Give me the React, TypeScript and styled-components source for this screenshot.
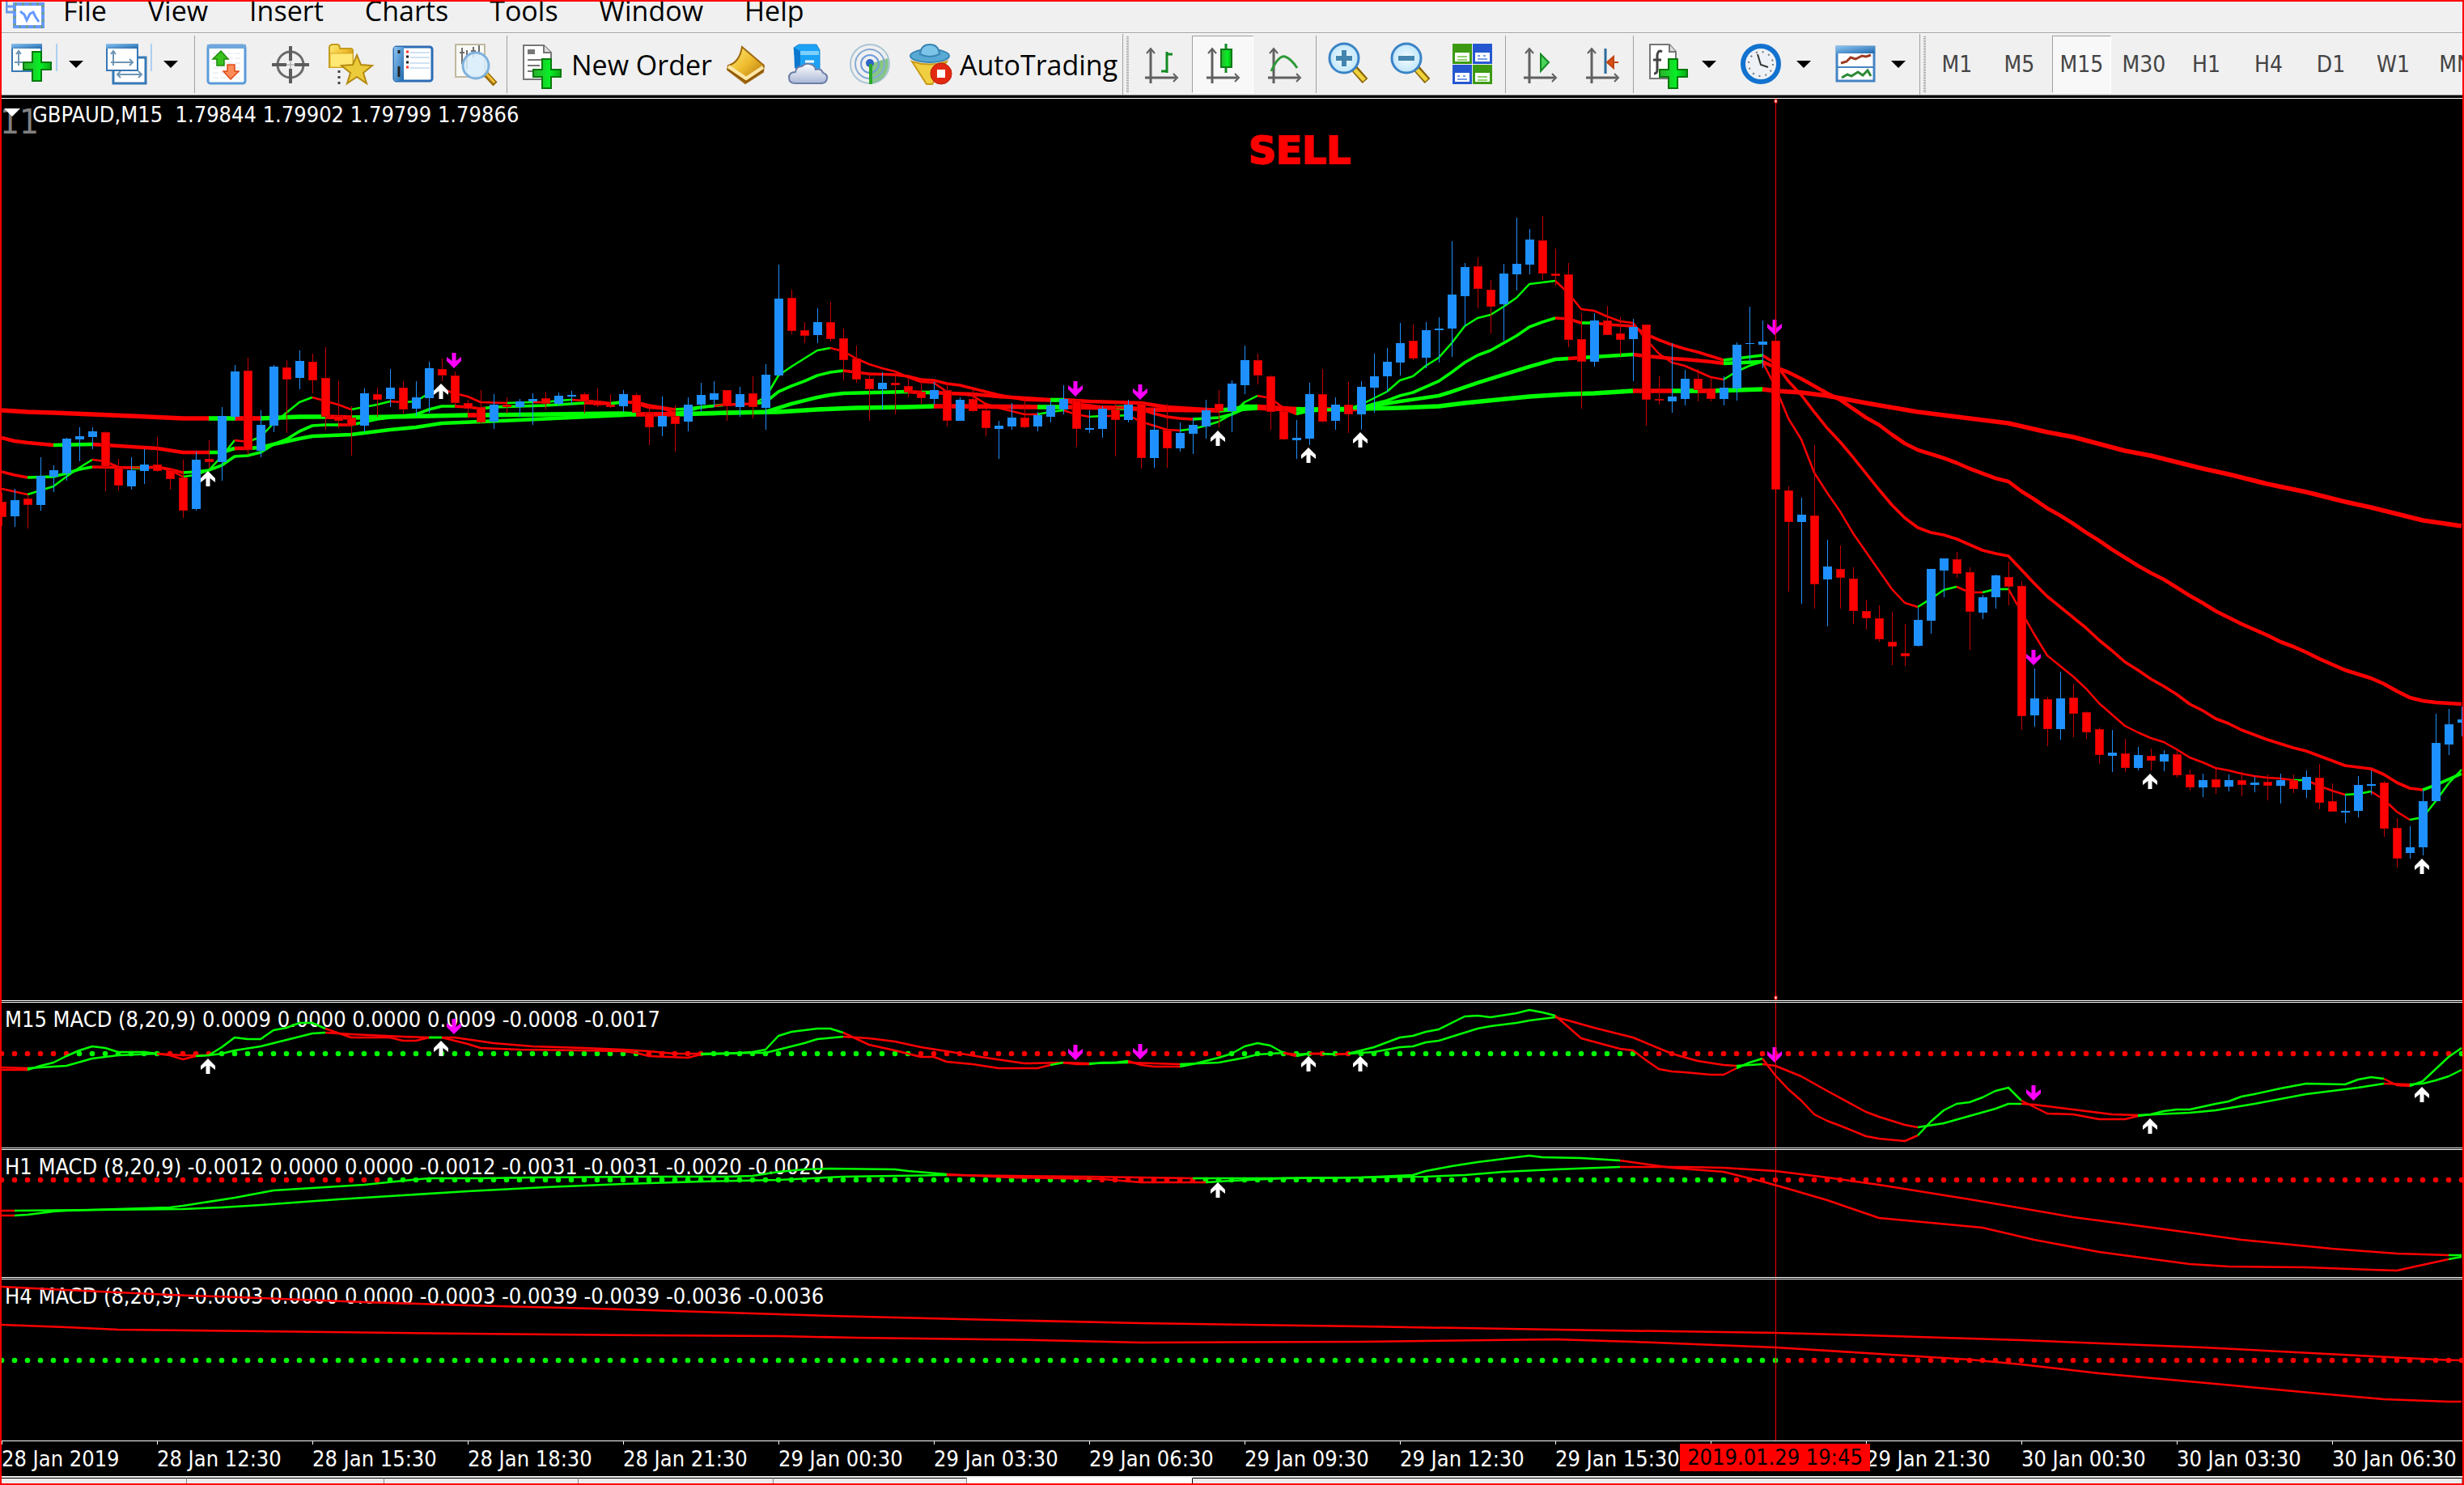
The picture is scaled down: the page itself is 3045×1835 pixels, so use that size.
import React from "react";
import styled, { createGlobalStyle, css } from "styled-components";

const UI_FONT = '"Open Sans", "Noto Sans", sans-serif';
const CHART_FONT = '"DejaVu Sans Condensed", "DejaVu Sans", sans-serif';

const RED = "#ff0000";
const LIME = "#00ff00";
const BLUE = "#1e90ff";
const STEP = 16;

const GlobalStyle = createGlobalStyle`
  *, *::before, *::after { box-sizing: border-box; }
  body { margin: 0; background: #000; overflow: hidden; }
`;

/* ---------- layout ---------- */

const Frame = styled.div`
  display: flex;
  flex-direction: column;
  height: 100vh;
  border: 2px solid ${RED};
  background: #000;
  overflow: hidden;
`;

const MenuBar = styled.nav`
  display: flex;
  flex: none;
  align-items: flex-start;
  gap: 51px;
  height: 39px;
  padding-left: 5px;
  background: #f0f0f0;
  border-bottom: 1px solid #a0a0a0;
  overflow: hidden;
`;

const MenuItem = styled.button`
  margin: -13px 0 0;
  padding: 0;
  border: 0;
  background: none;
  color: #000;
  font: 34px/48px ${UI_FONT};
`;

const AppIcon = styled.svg`
  width: 50px;
  height: 34px;
  margin-right: -30px;
`;

const Toolbar = styled.div`
  display: flex;
  flex: none;
  height: 77px;
  border-top: 1px solid #fff;
  border-bottom: 1px solid #808080;
  background: #f0f0f0;
  overflow: hidden;
`;

const Group = styled.div<{ $w: number; $pad?: number; $gap?: number }>`
  display: flex;
  flex: none;
  width: ${(p) => p.$w}px;
  padding: 2px 0 2px ${(p) => p.$pad ?? 0}px;
  gap: ${(p) => p.$gap ?? 0}px;
`;

const Divider = styled.span`
  flex: none;
  width: 1px;
  margin: 2px 0;
  background: #a0a0a0;
`;

const Grip = styled.span`
  flex: none;
  width: 10px;
  border-left: 1px solid #a0a0a0;
  background: repeating-linear-gradient(#a0a0a0 0 1px, #f0f0f0 1px 2px) 4px 3px / 3px 69px no-repeat;
`;

const ToolButton = styled.button<{ $w: number; $pressed?: boolean }>`
  display: flex;
  flex: none;
  align-items: center;
  justify-content: center;
  width: ${(p) => p.$w}px;
  padding: 0;
  border: 1px solid transparent;
  background: none;
  color: #000;
  font: 34px/48px ${UI_FONT};
  white-space: nowrap;
  svg { display: block; flex: none; overflow: visible; }
  ${(p) =>
    p.$pressed &&
    css`
      background: #f8f8f8;
      border-color: #a0a0a0 #fff #fff #a0a0a0;
    `}
`;

const LabelButton = styled(ToolButton)`
  justify-content: flex-start;
  gap: 6px;
  padding-left: 6px;
`;

const PeriodButton = styled(ToolButton)`
  color: #444;
  font: 28px/36px ${CHART_FONT};
`;

const Caret = styled.span`
  border: 9px solid transparent;
  border-top-color: #000;
  border-bottom: 0;
`;

const ChartWindow = styled.main`
  display: flex;
  flex: 1;
  flex-direction: column;
  min-height: 0;
  margin-top: 3px;
  border-top: 1px solid #fff;
  color: #fff;
  font: 27px/32px ${CHART_FONT};
`;

const Panel = styled.section<{ $h?: number }>`
  position: relative;
  flex: ${(p) => (p.$h ? "none" : "1")};
  height: ${(p) => (p.$h ? p.$h + "px" : "auto")};
  min-height: 0;
  overflow: hidden;
`;

const Splitter = styled.div`
  flex: none;
  height: 3px;
  border: solid #fff;
  border-width: 1px 0;
`;

const Plot = styled.svg`
  position: absolute;
  inset: 0;
  width: 100%;
  height: 100%;
`;

const PanelTitle = styled.h2<{ $top: number; $left: number }>`
  position: absolute;
  top: ${(p) => p.$top}px;
  left: ${(p) => p.$left}px;
  margin: 0;
  font: inherit;
  white-space: pre;
`;

const Watermark = styled.span`
  position: absolute;
  top: 3px;
  left: -2px;
  color: #808080;
  font: 42px/52px ${CHART_FONT};
`;

const MenuCaret = styled.span`
  position: absolute;
  top: 12px;
  left: 3px;
  border: 10px solid transparent;
  border-top-color: #fff;
  border-bottom: 0;
`;

const Signal = styled.strong`
  position: absolute;
  top: 36px;
  left: 1541px;
  color: ${RED};
  font: 700 47px/56px "DejaVu Sans", sans-serif;
  -webkit-text-stroke: 2px ${RED};
`;

const TimeAxis = styled.div`
  position: relative;
  display: flex;
  flex: none;
  height: 44px;
  border-top: 1px solid #fff;
`;

const TimeCell = styled.time`
  flex: none;
  width: 192px;
  padding-top: 6px;
  background: linear-gradient(#fff, #fff) 0 0 / 1px 4px no-repeat;
  white-space: nowrap;
`;

const TimeCursor = styled.time`
  position: absolute;
  top: 3px;
  left: 2074px;
  width: 235px;
  height: 34px;
  background: ${RED};
  color: #000;
  line-height: 34px;
  text-align: center;
`;

const TabStrip = styled.div`
  display: flex;
  flex: none;
  height: 9px;
  border-top: 2px solid #f0f0f0;
`;

const Tab = styled.span<{ $w?: number; $active?: boolean }>`
  flex: ${(p) => (p.$w ? "none" : "1")};
  width: ${(p) => p.$w ?? 0}px;
  border-top: 1px solid ${(p) => (p.$active ? "#fff" : "#000")};
  border-right: 1px solid ${(p) => (p.$active ? "#000" : "#888")};
  background: ${(p) => (p.$active ? "#fff" : "#ececec")};
`;

/* ---------- chart data: high,top,bottom,low for each bar ---------- */

const CANDLES = `
R609,620,639,650 B604,618,638,651 R611,616,624,653 B565,588,624,631 B575,581,589,608 B541,542,585,594
B528,539,543,570 B528,533,540,555 R533,534,577,607 R567,578,600,606 B565,581,601,605 B555,574,582,598
R540,574,582,583 R578,581,592,605 R568,590,631,640 B558,568,629,631 R544,567,571,579 B503,514,571,594
B451,459,515,519 R442,458,556,562 B507,525,557,565 B451,453,526,534 R445,454,469,535 B433,446,467,481
R437,447,470,486 R429,467,515,531 R471,514,520,529 R502,516,526,563 B480,486,526,534 R479,487,494,515
B456,479,493,503 R471,479,506,511 B471,491,505,514 B447,455,492,510 R443,456,464,471 R459,464,498,503
R494,498,505,517 R482,503,522,523 B487,500,521,530 R491,500,503,511 B493,496,503,515 B486,493,496,525
R484,492,499,506 B485,489,499,501 B483,488,490,500 R485,487,496,511 R480,495,501,503 R487,500,503,504
B482,487,502,509 R486,488,510,515 R499,510,528,550 B490,514,527,539 R501,514,524,558 B491,500,521,533
B473,488,500,509 B471,486,494,503 R482,482,502,520 B478,487,503,515 R465,486,503,517 B450,463,504,531
B327,369,464,464 R358,368,409,413 R398,408,415,424 B381,398,414,424 R373,398,419,422 R406,418,445,470
R427,443,469,473 R462,468,481,520 B460,473,481,506 R465,473,476,512 R468,477,485,491 R472,484,492,499
B472,482,493,500 R472,482,520,527 B491,494,520,520 R481,493,508,509 R504,507,529,539 B520,526,530,567
B498,516,527,531 R493,516,528,529 B509,513,527,533 B495,501,515,522 B476,493,506,512 R495,495,530,552
B507,529,531,535 B502,505,530,541 R497,506,519,564 B494,500,519,522 R499,499,566,579 B505,531,566,578
R499,531,554,578 B522,535,554,558 B516,525,536,561 B494,507,527,542 R482,499,508,528 B470,474,508,534
B427,445,476,487 R437,445,464,475 R464,465,509,531 R503,508,543,544 B519,541,544,567 B473,487,542,550
R456,487,521,522 B491,500,520,531 R472,500,512,535 B471,478,512,531 B437,465,479,510 B430,447,465,485
B399,424,448,464 R401,421,443,445 B398,408,442,455 B392,406,408,448 B298,364,406,441 B325,330,366,403
R318,329,357,381 R346,358,379,412 B326,338,376,421 B269,326,339,359 B283,296,327,339 R267,297,338,346
R307,338,341,353 R325,339,420,429 R387,419,447,505 B387,396,447,453 R378,396,414,414 R392,412,420,440
B394,404,419,471 R401,401,494,526 R465,493,495,500 B424,490,496,510 B457,468,493,501 R456,468,482,496
R467,480,493,496 B465,479,493,501 B423,426,480,495 B379,424,425,446 B396,422,426,455 R420,421,605,605
R601,606,645,731 B615,636,645,746 R550,637,722,752 B667,700,716,774 R674,703,714,752 R701,715,755,771
R741,755,764,778 R748,764,790,793 R756,793,799,822 R771,807,811,823 B751,766,798,799 B703,703,767,783
B690,690,705,738 R682,691,709,714 R701,707,756,803 B735,738,757,765 B710,711,738,752 R694,713,725,748
R718,724,885,902 B826,863,884,898 R861,864,901,922 B830,863,901,914 R845,862,882,911 R879,880,905,913
R899,901,933,944 B902,930,934,954 R913,931,949,954 B923,933,949,952 R925,934,940,952 B927,932,941,953
R928,932,958,961 R951,957,973,977 B956,964,973,985 R950,963,973,981 B957,964,972,978 R953,964,970,984
B960,967,970,979 R957,966,971,989 B956,964,971,993 R957,964,975,980 B952,960,976,986 R944,961,992,1000
R968,990,1003,1003 B982,1002,1004,1017 B959,970,1002,1010 B952,969,971,982 R965,967,1024,1034
R1011,1023,1061,1072 B1021,1047,1054,1061 B976,990,1047,1057 B882,918,990,990 B876,895,920,933
B873,889,893,910`
  .trim()
  .split(/\s+/)
  .map((bar) => ({ up: bar[0] === "B", v: bar.slice(1).split(",").map(Number) }));

/* Each series is a list of bar:y points; R and G switch the colour from the last point on. */

const MA_FAST = `R 0:604 2:611 G 3:606 4:601 5:589 6:578 7:568 R 8:570 9:577 11:578 12:577 13:581 14:589 G 15:587 16:581 17:564
18:544 R 19:546 G 20:540 21:523 22:510 23:497 24:491 R 26:500 27:506 G 28:503 29:500 30:496 R 31:497 G 32:496 33:486 34:481
R 35:486 36:490 37:497 39:498 G 41:497 R 42:497 G 43:495 44:494 R 46:496 47:498 G 48:496 R 49:499 50:504 51:505 52:510 G 53:508
54:504 55:502 R 56:499 57:500 58:499 G 59:491 60:464 61:453 62:443 63:433 64:430 R 65:434 66:443 67:450 68:455 69:459 70:466
71:472 72:473 73:484 74:487 75:489 76:499 77:504 78:508 79:512 80:512 G 81:509 82:507 R 83:512 84:515 G 85:514 R 86:514 G 87:513
R 88:521 89:526 90:531 91:532 G 92:530 93:526 94:521 95:512 96:497 97:489 R 98:492 99:504 100:512 G 101:508 102:506 104:505
105:500 106:492 107:484 108:470 109:465 110:452 111:442 112:424 113:403 114:393 115:389 116:379 117:368 118:351 119:349 120:347
R 121:362 122:382 123:384 124:391 125:397 126:399 127:419 128:437 129:448 130:452 131:459 132:466 133:469 G 134:459 135:452
136:447 R 137:478 138:517 139:543 140:584 141:609 142:632 143:659 144:682 145:705 146:728 147:745 148:750 G 149:740 150:729
151:725 R 152:732 153:732 G 154:728 155:728 R 156:756 157:784 158:810 159:823 160:836 161:851 162:869 163:883 164:897 165:905
166:912 167:917 168:926 169:936 170:942 171:949 172:952 173:956 174:959 175:961 176:962 177:964 G 178:964 R 179:971 180:977
181:982 G 182:981 183:978 R 184:988 185:1003 186:1013 G 187:1010 188:990 189:968 190:951`;

const MA_MID = `R 0:583 1:587 2:590 G 4:589 5:585 6:580 7:577 R 10:578 G 11:578 R 12:577 13:580 14:584 G 15:583 16:581 17:575
18:564 19:563 20:559 21:549 22:543 23:533 24:526 25:525 26:525 R 27:525 G 29:518 31:514 32:512 33:506 34:502 35:502 R 36:503
37:505 G 38:503 42:501 45:498 R 47:499 G 48:497 R 49:497 50:501 52:506 G 53:505 54:503 56:500 R 58:499 G 59:497 60:484 61:477
62:471 63:464 64:460 65:458 R 66:460 67:462 69:463 70:465 71:469 72:470 73:474 74:476 75:480 76:484 77:488 78:491 79:494 81:495
G 82:495 R 83:499 85:503 87:504 88:506 89:511 90:515 91:517 92:518 G 94:516 95:512 96:505 97:503 R 99:505 100:511 G 101:508
104:505 105:504 106:499 107:495 108:489 109:485 110:478 111:471 112:460 113:448 114:439 115:433 116:424 117:415 118:404 119:398
120:393 R 121:394 122:399 G 123:399 R 124:401 125:402 126:403 127:413 128:420 129:426 130:431 131:435 132:440 133:445 G 136:439
R 137:449 138:471 139:488 140:509 141:529 142:546 143:565 144:585 145:605 146:624 147:640 148:652 149:658 150:661 151:666
152:673 153:680 154:684 155:687 156:704 157:721 158:737 159:750 160:763 161:776 162:791 163:804 164:818 165:828 166:839 167:848
168:858 169:870 170:878 171:888 172:894 173:902 174:908 175:914 176:919 177:924 178:928 179:934 180:940 181:946 183:950 184:957
185:967 186:974 187:976 G 188:970 189:963 190:956`;

const MA_SLOW = `R 0:541 1:545 2:547 4:550 G 7:549 R 9:551 12:554 14:559 16:559 G 17:559 18:554 R 19:554 G 20:553 21:549 23:542
24:539 27:537 30:531 32:528 34:523 37:521 40:519 44:516 48:513 49:512 R 52:511 G 55:511 59:509 60:504 61:499 62:495 63:491 64:488
65:486 70:484 R 71:485 G 72:485 R 73:486 75:487 77:490 79:492 81:494 G 82:494 R 84:496 88:498 90:503 92:505 94:507 G 95:506
96:502 97:502 R 100:505 G 102:506 R 103:505 G 104:505 R 105:505 G 106:501 108:496 111:489 112:484 114:473 116:463 118:453 120:444
121:443 R 122:442 G 124:440 126:438 R 127:440 129:443 130:444 132:447 133:449 G 136:447 R 137:454 138:460 139:468 140:477
141:486 142:494 143:505 144:516 145:525 146:537 147:548 148:556 149:561 150:566 151:572 152:579 153:585 154:591 155:595 156:607
157:617 158:628 159:637 160:647 161:658 162:668 163:679 164:689 165:699 166:708 167:716 168:726 169:736 170:745 171:755 172:763
173:771 174:778 175:785 176:793 177:799 178:806 179:814 180:821 181:828 182:833 183:838 184:845 185:854 186:862 187:866 188:868
190:870`;

const MA_BASE = `R 0:507 2:509 4:510 7:512 10:514 14:517 16:517 G 18:517 R 20:517 G 23:515 25:515 R 27:516 G 30:515 36:513 R 37:513
G 48:511 49:512 R 52:512 G 56:510 60:509 63:506 66:504 70:503 72:502 R 74:502 80:503 G 82:503 R 86:504 G 87:504 R 88:506 93:507
94:507 G 97:504 R 98:505 100:506 G 102:506 R 103:506 G 104:506 R 105:505 G 108:504 111:502 113:498 118:490 121:487 123:486
126:483 R 129:483 G 131:483 R 132:483 G 134:482 136:481 R 137:483 139:485 141:489 144:498 148:509 151:515 155:523 158:534
160:540 164:557 166:563 170:579 172:586 175:598 178:608 181:620 183:627 187:643 190:650`;

const M15_MAIN = `R 0:1322 2:1322 G 3:1317 4:1313 5:1305 6:1298 7:1293 8:1295 9:1300 11:1300 12:1302 R 13:1304 14:1309 15:1305
G 16:1304 17:1294 18:1282 19:1284 20:1284 21:1273 22:1270 23:1264 24:1264 25:1271 R 27:1282 30:1282 31:1286 32:1286 33:1282
G 34:1282 R 35:1286 36:1290 37:1295 40:1297 45:1298 48:1299 49:1301 50:1305 53:1307 54:1303 G 56:1302 58:1300 59:1297 60:1280
61:1275 62:1273 63:1271 64:1271 65:1276 R 67:1291 69:1298 71:1306 72:1306 73:1312 75:1315 77:1320 80:1320 81:1316 G 82:1313
R 83:1315 84:1315 G 85:1313 86:1313 87:1311 R 88:1316 89:1318 91:1318 G 92:1315 93:1311 94:1307 95:1302 96:1293 97:1289 98:1292
99:1301 R 100:1305 G 101:1302 R 102:1302 G 103:1303 R 104:1302 G 105:1298 106:1294 108:1282 109:1280 110:1275 111:1272 113:1256
114:1255 115:1257 117:1252 118:1248 119:1251 120:1255 R 121:1269 122:1283 125:1296 126:1298 127:1310 128:1321 129:1324 130:1325
132:1328 133:1328 134:1320 G 135:1313 136:1308 R 137:1329 138:1346 139:1360 140:1377 141:1385 142:1391 144:1404 145:1407
147:1410 148:1403 G 149:1386 150:1372 151:1364 152:1362 153:1356 154:1348 155:1344 156:1360 R 158:1376 160:1377 162:1383
164:1383 165:1379 G 166:1377 167:1373 168:1371 169:1371 171:1364 172:1361 173:1355 174:1352 176:1345 178:1339 181:1340 182:1334
183:1331 184:1333 R 185:1341 186:1342 G 187:1336 188:1321 189:1306 190:1295`;

const M15_SIGNAL = `R 0:1319 2:1320 G 4:1318 5:1317 7:1308 9:1304 12:1302 R 14:1304 16:1304 G 17:1302 18:1298 20:1293 22:1285
24:1277 25:1276 R 27:1278 31:1281 33:1282 G 34:1282 R 35:1282 38:1289 41:1293 45:1295 48:1297 50:1299 52:1302 54:1302 G 58:1301
59:1301 60:1297 62:1289 63:1284 65:1281 R 67:1283 69:1287 71:1294 73:1299 76:1307 79:1314 82:1313 84:1314 G 87:1313 R 89:1314
91:1315 G 94:1313 96:1307 97:1303 99:1301 R 100:1303 G 101:1302 R 102:1302 G 103:1303 R 104:1302 G 106:1300 108:1294 109:1293
110:1288 111:1286 112:1281 114:1271 115:1268 117:1264 118:1261 120:1257 R 121:1261 123:1270 126:1282 129:1302 131:1311 133:1316
134:1317 G 136:1315 R 137:1317 139:1330 141:1348 144:1374 145:1380 147:1390 148:1393 G 150:1388 152:1379 154:1370 155:1364
156:1364 R 157:1365 160:1371 163:1377 165:1378 G 169:1375 171:1372 174:1364 178:1352 182:1344 184:1339 R 186:1340 G 187:1339
188:1335 189:1330 190:1322`;

const H1_MAIN = `R 0:1502 1:1502 G 2:1501 4:1497 5:1496 9:1494 13:1492 14:1490 18:1480 21:1471 24:1468 28:1464 31:1459 33:1456
37:1456 41:1455 50:1454 56:1454 58:1453 60:1448 62:1445 64:1444 69:1445 70:1447 73:1451 R 78:1455 85:1457 88:1461 93:1461 G 95:1459
99:1456 105:1455 109:1452 110:1447 112:1441 114:1436 118:1428 119:1430 122:1431 125:1434 R 129:1443 133:1448 136:1460 138:1469
141:1483 145:1505 153:1517 157:1532 162:1547 169:1562 172:1565 178:1566 183:1569 185:1570 189:1556 G 190:1553`;

const H1_SIGNAL = `R 0:1496 1:1496 G 14:1494 17:1492 20:1489 26:1482 30:1478 36:1472 42:1467 48:1463 54:1460 60:1458 65:1454
73:1452 R 84:1454 92:1456 G 98:1456 105:1455 110:1454 113:1452 116:1448 120:1445 125:1442 R 130:1442 133:1443 137:1447 141:1455
145:1464 152:1482 160:1504 168:1521 173:1532 180:1543 185:1549 189:1551 G 190:1551`;

const H4_MAIN = `R 0:1590 5:1594 13:1600 20:1604 28:1609 36:1613 48:1618 60:1624 64:1626 74:1630 88:1635 105:1639 120:1643
137:1647 144:1650 156:1656 170:1665 182:1675 188:1680 190:1681`;

const H4_SIGNAL = `R 0:1637 5:1640 9:1643 20:1645 36:1648 50:1650 60:1651 66:1653 80:1656 88:1659 105:1658 120:1655 126:1658
137:1665 145:1673 152:1680 156:1686 162:1697 171:1710 179:1722 184:1729 189:1732 190:1732`;

type Mark = [bar: number, y: number, up: boolean];

const PRICE_MARKS: Mark[] = [
  [16, 582, true], [34, 474, true], [94, 532, true], [101, 553, true], [105, 534, true], [166, 956, true], [187, 1061, true],
  [35, 436, false], [83, 471, false], [88, 475, false], [137, 395, false], [157, 803, false],
];

const M15_MARKS: Mark[] = [
  [16, 1308, true], [34, 1286, true], [101, 1305, true], [105, 1305, true], [166, 1382, true], [187, 1343, true],
  [35, 1259, false], [83, 1291, false], [88, 1290, false], [137, 1294, false], [157, 1341, false],
];

/* ---------- chart drawing ---------- */

function Series({ data, width = 2.5 }: { data: string; width?: number }) {
  const runs: { color: string; points: string[] }[] = [];
  let last: string | null = null;
  for (const token of data.trim().split(/\s+/)) {
    if (token === "R" || token === "G") {
      runs.push({ color: token === "R" ? RED : LIME, points: last ? [last] : [] });
      continue;
    }
    const [bar, y] = token.split(":").map(Number);
    last = `${bar * STEP},${y}`;
    runs[runs.length - 1].points.push(last);
  }
  return (
    <g fill="none" strokeWidth={width} strokeLinejoin="round">
      {runs.map((run, i) => (
        <polyline key={i} points={run.points.join(" ")} stroke={run.color} />
      ))}
    </g>
  );
}

function Candles() {
  return (
    <g shapeRendering="crispEdges">
      {CANDLES.map(({ up, v: [high, top, bottom, low] }, i) => {
        const x = i * STEP;
        const h = Math.max(bottom - top, 1);
        return (
          <g key={i}>
            <rect x={x} y={high} width={1} height={low - high} fill={up ? BLUE : "#c80000"} />
            <rect x={x - 5} y={top} width={11} height={h} fill={up ? BLUE : "#c80000"} />
            {!up && h > 2 && <rect x={x - 4} y={top + 1} width={9} height={h - 2} fill={RED} />}
          </g>
        );
      })}
    </g>
  );
}

function Marks({ items }: { items: Mark[] }) {
  return (
    <g>
      {items.map(([bar, y, up], i) => (
        <path
          key={i}
          transform={`translate(${bar * STEP - 1} ${up ? y : y + 19}) scale(1 ${up ? 1 : -1})`}
          d="M0 0 9 9v5L2.500 9v10h-5V9L-9 14V9Z"
          fill={up ? "#fff" : "#ff00ff"}
        />
      ))}
    </g>
  );
}

/* Runs of dots: [last bar, colour]. */
function Dots({ y, runs }: { y: number; runs: [number, string][] }) {
  let start = 0;
  return (
    <g>
      {runs.flatMap(([end, color]) => {
        const dots = [];
        for (let i = start; i <= end; i++) dots.push(<circle key={i} cx={i * STEP} cy={y} r={3.3} fill={color} />);
        start = end + 1;
        return dots;
      })}
    </g>
  );
}

const Cursor = () => <rect x={137 * STEP} width={1} height="100%" fill={RED} shapeRendering="crispEdges" />;

const M15_DOTS: [number, string][] = [
  [5, RED], [12, LIME], [16, RED], [49, LIME], [54, RED], [70, LIME], [94, RED], [101, LIME], [102, RED],
  [103, LIME], [104, RED], [126, LIME], [189, RED], [190, LIME],
];
const H1_DOTS: [number, string][] = [[29, RED], [84, LIME], [92, RED], [133, LIME], [190, RED]];
const H4_DOTS: [number, string][] = [[137, LIME], [190, RED]];

/* ---------- toolbar icons, 60 by 60 ---------- */

const Icon = ({ children }: { children: React.ReactNode }) => (
  <svg width="60" height="60" viewBox="0 0 60 60" fill="none" aria-hidden="true">
    {children}
  </svg>
);

const Plus = ({ x, y }: { x: number; y: number }) => (
  <path
    transform={`translate(${x} ${y})`}
    d="M12 1h11v13h12v9H23v14H12V23H1v-9h11Z"
    fill="url(#green)"
    stroke="#067a0c"
    strokeWidth="2"
  />
);

const Axes = () => (
  <g stroke="#606060" strokeWidth="3">
    <path d="M17 53V11M10 46h38" />
    <path d="m12 16 5-6 5 6M45 41l5 5-5 5" strokeWidth="2" />
  </g>
);

const Defs = () => (
  <svg width="0" height="0" style={{ position: "absolute" }} aria-hidden="true">
    <defs>
      <linearGradient id="green">
        <stop offset="0" stopColor="#2fae30" />
        <stop offset=".6" stopColor="#06ef25" />
        <stop offset="1" stopColor="#0ba816" />
      </linearGradient>
      <linearGradient id="blue" x2="1" y2="1">
        <stop offset="0" stopColor="#8dc5f2" />
        <stop offset="1" stopColor="#1f69ad" />
      </linearGradient>
      <linearGradient id="gold" x2="1" y2="1">
        <stop offset="0" stopColor="#fff07a" />
        <stop offset=".5" stopColor="#eebb2e" />
        <stop offset="1" stopColor="#a86a08" />
      </linearGradient>
      <linearGradient id="cloud" x2="0" y2="1">
        <stop offset="0" stopColor="#fff" />
        <stop offset="1" stopColor="#a9b7d6" />
      </linearGradient>
      <radialGradient id="glass">
        <stop offset="0" stopColor="#f5fdff" />
        <stop offset="1" stopColor="#bfe6fa" />
      </radialGradient>
    </defs>
  </svg>
);

const LensIcon = ({ minus }: { minus?: boolean }) => (
  <Icon>
    <path d="m37 34 14 16" stroke="#8a6408" strokeWidth="9" />
    <path d="m38 36 12 13" stroke="#f0d23c" strokeWidth="5" />
    <circle cx="25" cy="22" r="18" fill="url(#glass)" stroke="#3a83c6" strokeWidth="3" />
    <path d={minus ? "M15 22h20" : "M15 22h20M25 12v20"} stroke="#4385ae" strokeWidth="6" />
  </Icon>
);

const NewChartIcon = () => (
  <Icon>
    <rect x="6" y="5" width="36" height="33" fill="#fff" stroke="#3678b4" strokeWidth="2" />
    <path d="M5 4h38v6H5z" fill="url(#blue)" />
    <path d="M14 14v17M9 27h12M11 17l3-4 3 4" stroke="#6e96b4" strokeWidth="2" />
    <Plus x={19} y={13} />
    <path d="M61 4v34" stroke="#66aef5" />
  </Icon>
);

const WindowsIcon = () => (
  <Icon>
    <rect x="14" y="21" width="40" height="32" fill="#fff" stroke="#3678b4" strokeWidth="3" />
    <path d="M20 42h28M23 38l-4 4 4 4M45 38l4 4-4 4" stroke="#6e96b4" strokeWidth="2" />
    <rect x="6" y="5" width="38" height="32" fill="#fff" stroke="#3678b4" strokeWidth="2" />
    <path d="M5 4h40v6H5z" fill="url(#blue)" />
    <path d="M14 14v17M11 27h26M11 17l3-4 3 4M34 23l4 4-4 4" stroke="#6e96b4" strokeWidth="2" />
    <path d="M61 4v34" stroke="#66aef5" />
  </Icon>
);

const MarketWatchIcon = () => (
  <Icon>
    <rect x="7" y="6" width="46" height="47" rx="3" fill="#fff" stroke="#5b9bd8" strokeWidth="3" />
    <path d="M6 5h48v5H6z" fill="#6fa8dc" />
    <path d="M13 16h34M13 22h34M13 28h34M13 34h34M13 40h34M13 46h34" stroke="#dfe3e8" strokeDasharray="7 2" />
    <path d="m23 13 9 10h-5v8h-9v-8h-5Z" fill="#39c21d" stroke="#1c8b0c" strokeWidth="1.500" />
    <path d="m35 48 10-10h-5v-8h-9v8h-5Z" fill="#ff8c5a" stroke="#de4a16" strokeWidth="1.500" />
  </Icon>
);

const CrosshairIcon = () => (
  <Icon>
    <circle cx="32" cy="30" r="16" stroke="#6a6a6a" strokeWidth="3" />
    <path d="M32 7v18M32 35v18M9 30h18M37 30h18" stroke="#5c5c5c" strokeWidth="4" />
    <path d="M32 25v10M27 30h10" stroke="#999" />
  </Icon>
);

const FavoritesIcon = () => (
  <Icon>
    <path d="M3 8q1-3 4-3h6q3 0 3 5h13q3 0 3 3v20H3Z" fill="url(#gold)" stroke="#c39a1c" strokeWidth="2" />
    <path d="M4 16h28v17H4z" fill="#ffe873" stroke="#d7ac28" />
    <path d="M15 37v19" stroke="#444" strokeWidth="3" strokeDasharray="3 4" />
    <path d="m37 18 5 12 14 1-11 9 4 13-12-8-12 8 4-13-11-9 14-1Z" fill="#eccb3a" stroke="#b58a10" strokeWidth="2" />
  </Icon>
);

const NavigatorIcon = () => (
  <Icon>
    <rect x="6" y="8" width="47" height="42" rx="3" fill="#fff" stroke="#2b6cb5" strokeWidth="3" />
    <path d="M6 8h12v42H6z" fill="url(#blue)" />
    <path d="M12 12v4M12 32v13" stroke="#222" strokeWidth="3" />
    <path d="M26 15h24M26 21h24M26 28h24M26 34h24" stroke="#cfe2f5" strokeWidth="2" />
    <path d="M21 14h3M21 33h3" stroke="#f33" strokeWidth="3" />
    <path d="M21 20h3M21 27h3" stroke="#222" strokeWidth="3" />
  </Icon>
);

const TesterIcon = () => (
  <Icon>
    <path d="M5 5h36v40H5z" fill="#f8f8f4" stroke="#c0b9a0" strokeWidth="2" />
    <path d="M13 9v20M19 12v24M27 8v13M34 6v12M10 15h6M24 13h6" stroke="#6d6d6d" strokeWidth="2" />
    <path d="m41 40 13 14" stroke="#9a6b08" strokeWidth="7" />
    <path d="m41 39 12 13" stroke="#eec13b" strokeWidth="3" />
    <circle cx="30" cy="31" r="16" fill="#d7edfc" fillOpacity=".85" stroke="#7fb1de" strokeWidth="3" />
  </Icon>
);

const OrderIcon = () => (
  <Icon>
    <path d="M7 6h25l9 9v33H7z" fill="#fff" stroke="#777" strokeWidth="2" />
    <path d="M32 6v9h9" fill="#ddd" stroke="#777" strokeWidth="2" />
    <path d="M12 14h9" stroke="#777" strokeWidth="6" />
    <path d="M12 24h22M12 31h15M12 38h9" stroke="#777" strokeWidth="2" />
    <Plus x={18} y={22} />
  </Icon>
);

const BookIcon = () => (
  <Icon>
    <path d="M24 8 51 31l-1 8-22 14L6 36l1-5q14-4 17-23Z" fill="url(#gold)" stroke="#a06a10" strokeWidth="2" />
    <path d="M7 32 29 47l21-14" stroke="#fbe7a8" strokeWidth="4" />
    <path d="M7 36 29 51l21-14" stroke="#8f5708" strokeWidth="2" />
  </Icon>
);

const CloudIcon = () => (
  <Icon>
    <path d="M12 9 18 5h22l4 7v26H16Z" fill="#1da3f6" stroke="#1387d6" />
    <path d="m12 9 8 4v25l-7-4z" fill="#0c77cf" />
    <path d="M20 13h23v5H20z" fill="#7dd0ff" />
    <path d="M26 26h11M26 31h8" stroke="#fff" strokeWidth="3" />
    <path
      d="M14 53q-8 0-8-7t8-7q1-7 8-7 4-4 9-3 7 1 8 7 7-2 9 4 6 2 5 7-1 6-8 6Z"
      fill="url(#cloud)"
      stroke="#6d7fa9"
      strokeWidth="2"
    />
  </Icon>
);

const SignalIcon = () => (
  <Icon>
    <path d="M30 29V54a25 25 0 0 0 22-32Z" fill="#4caf50" fillOpacity=".65" />
    <circle cx="30" cy="29" r="24" stroke="#8fb4c8" strokeWidth="2" strokeOpacity=".7" />
    <circle cx="30" cy="29" r="18" stroke="#87abd4" strokeWidth="2" />
    <circle cx="30" cy="29" r="11" stroke="#6f9bdc" strokeWidth="2" />
    <circle cx="30" cy="28" r="5" fill="#2f66c8" />
    <path d="M31 29v25" stroke="#2aa82a" strokeWidth="4" />
  </Icon>
);

const AutoTradingIcon = () => (
  <Icon>
    <path d="m7 26 18 28h7l18-28q-22 7-43 0Z" fill="#f0cf43" stroke="#c99a1a" strokeWidth="2" />
    <ellipse cx="29" cy="19" rx="24" ry="8" fill="#58a9d4" stroke="#3a86b5" strokeWidth="2" />
    <path d="M17 17q1-12 12-12t12 12q-12 6-24 0Z" fill="#7cc4e8" stroke="#3a86b5" strokeWidth="2" />
    <circle cx="43" cy="41" r="13" fill="#e22a12" stroke="#b81a08" />
    <path d="M38 36h10v10H38z" fill="#fff" />
  </Icon>
);

const BarChartIcon = () => (
  <Icon>
    <Axes />
    <path d="M37 14v26M37 17h7M30 38h7" stroke="#138a22" strokeWidth="3" />
  </Icon>
);

const CandleIcon = () => (
  <Icon>
    <Axes />
    <path d="M34 4v36" stroke="#138a22" strokeWidth="3" />
    <path d="M28 11h13v22H28z" fill="url(#green)" stroke="#0d7a18" strokeWidth="2" />
  </Icon>
);

const LineChartIcon = () => (
  <Icon>
    <Axes />
    <path d="M14 38q9-20 17-18 7 2 15 14" stroke="#2f9a3a" strokeWidth="3" />
  </Icon>
);

const TileIcon = () => (
  <Icon>
    <path d="M5 4h24v25H5zM30 30h24v24H30z" fill="#3c9a12" />
    <path d="M30 4h24v25H30zM5 30h24v24H5z" fill="#2557d0" />
    <path d="M8 15h18v11H8zM33 15h18v11H33zM8 40h18v11H8zM33 40h18v11H33z" fill="#fff" />
    <path d="M11 20h12M11 24h12M36 45h12M36 49h12" stroke="#8fd06a" strokeWidth="2" />
    <path d="M36 19h3M43 19h3M36 23h12M11 44h3M18 44h3M11 48h12" stroke="#7a9ce8" strokeWidth="2" />
  </Icon>
);

const ScrollIcon = () => (
  <Icon>
    <Axes />
    <path d="M31 17 41 27 31 38Z" fill="#4bd45a" stroke="#138a22" strokeWidth="2" />
  </Icon>
);

const ShiftIcon = () => (
  <Icon>
    <Axes />
    <path d="M34 10v31" stroke="#2b6b9c" strokeWidth="3" />
    <path d="m36 27 8-7v14ZM43 27h7" fill="#d94f16" stroke="#c04412" strokeWidth="2" />
  </Icon>
);

const IndicatorIcon = () => (
  <Icon>
    <path d="M12 5h24l8 9v33H12z" fill="#fff" stroke="#777" strokeWidth="2" />
    <path d="M36 5v9h8" fill="#ddd" stroke="#777" strokeWidth="2" />
    <path d="M27 14q-5-3-6 4v18q0 5-4 5M16 24h10" stroke="#444" strokeWidth="3" />
    <Plus x={23} y={22} />
  </Icon>
);

const ClockIcon = () => (
  <Icon>
    <circle cx="32" cy="29" r="22" fill="#eef2f6" stroke="#1272cf" strokeWidth="6" />
    <circle cx="32" cy="29" r="15" stroke="#777" strokeWidth="2" strokeDasharray="2 6" />
    <path d="M28 17l4 13 9 3" stroke="#333" strokeWidth="2" />
  </Icon>
);

const TemplateIcon = () => (
  <Icon>
    <path d="M9 8h46v42H9z" fill="#fff" stroke="#4484c4" strokeWidth="3" />
    <path d="M8 7h48v9H8z" fill="url(#blue)" />
    <path d="M9 33h46" stroke="#4484c4" strokeWidth="2" />
    <path d="m14 28 7-2 5-5 6 2 8-4 5 1 6-2" stroke="#9c3a20" strokeWidth="3" />
    <path d="m15 46 7-4 5 2 8-5 6 4 6-6 4 7" stroke="#2b8a35" strokeWidth="3" />
  </Icon>
);

const Split = ({ name, children }: { name: string; children: React.ReactNode }) => (
  <>
    <ToolButton $w={74} aria-label={name}>
      {children}
    </ToolButton>
    <ToolButton $w={35} aria-label={`${name} list`}>
      <Caret />
    </ToolButton>
  </>
);

const MENU = ["File", "View", "Insert", "Charts", "Tools", "Window", "Help"];
const PERIODS = ["M1", "M5", "M15", "M30", "H1", "H4", "D1", "W1", "MN"];
const TIMES = [
  "28 Jan 2019", "28 Jan 12:30", "28 Jan 15:30", "28 Jan 18:30", "28 Jan 21:30", "29 Jan 00:30", "29 Jan 03:30",
  "29 Jan 06:30", "29 Jan 09:30", "29 Jan 12:30", "29 Jan 15:30", "", "29 Jan 21:30", "30 Jan 00:30", "30 Jan 03:30",
  "30 Jan 06:30",
];

export default function App() {
  return (
    <Frame>
      <GlobalStyle />
      <Defs />
      <MenuBar>
        <AppIcon viewBox="0 0 50 34" fill="none" aria-hidden="true">
          <path d="M1 0v13h10M1 6h10" stroke="#6a9ae8" strokeWidth="3" />
          <rect x="11" y="3" width="35" height="28" fill="#fff" stroke="#6699ff" strokeWidth="4" />
          <rect x="11" y="3" width="35" height="28" stroke="#6d9c9c" strokeWidth="4" strokeDasharray="3 6" />
          <path d="m18 12 5 4 3 7 4-8 4-2 3 6 4 6" stroke="#6699ff" strokeWidth="3" />
        </AppIcon>
        {MENU.map((name) => (
          <MenuItem key={name}>{name}</MenuItem>
        ))}
      </MenuBar>

      <Toolbar>
        <Group $w={238}>
          <Split name="New chart"><NewChartIcon /></Split>
          <Group as="span" $w={8} />
          <Split name="Profiles"><WindowsIcon /></Split>
        </Group>
        <Divider />
        <Group $w={385}>
          <ToolButton $w={77} aria-label="Market watch"><MarketWatchIcon /></ToolButton>
          <ToolButton $w={77} aria-label="Data window"><CrosshairIcon /></ToolButton>
          <ToolButton $w={77} aria-label="Favorites"><FavoritesIcon /></ToolButton>
          <ToolButton $w={77} aria-label="Navigator"><NavigatorIcon /></ToolButton>
          <ToolButton $w={77} aria-label="Strategy tester"><TesterIcon /></ToolButton>
        </Group>
        <Divider />
        <Group $w={760} $pad={6}>
          <LabelButton $w={252}><OrderIcon />New Order</LabelButton>
          <ToolButton $w={76} aria-label="MetaEditor"><BookIcon /></ToolButton>
          <ToolButton $w={76} aria-label="Hosting"><CloudIcon /></ToolButton>
          <ToolButton $w={76} aria-label="Signals"><SignalIcon /></ToolButton>
          <LabelButton $w={274}><AutoTradingIcon />AutoTrading</LabelButton>
        </Group>
        <Grip />
        <Group $w={229}>
          <ToolButton $w={76} aria-label="Bar chart"><BarChartIcon /></ToolButton>
          <ToolButton $w={76} $pressed aria-pressed="true" aria-label="Candlesticks"><CandleIcon /></ToolButton>
          <ToolButton $w={76} aria-label="Line chart"><LineChartIcon /></ToolButton>
        </Group>
        <Divider />
        <Group $w={233}>
          <ToolButton $w={77} aria-label="Zoom in"><LensIcon /></ToolButton>
          <ToolButton $w={77} aria-label="Zoom out"><LensIcon minus /></ToolButton>
          <ToolButton $w={77} aria-label="Tile windows"><TileIcon /></ToolButton>
        </Group>
        <Divider />
        <Group $w={157} $pad={3}>
          <ToolButton $w={77} aria-label="Auto scroll"><ScrollIcon /></ToolButton>
          <ToolButton $w={77} aria-label="Chart shift"><ShiftIcon /></ToolButton>
        </Group>
        <Divider />
        <Group $w={353} $pad={1}>
          <Split name="Indicators"><IndicatorIcon /></Split>
          <Group as="span" $w={8} />
          <Split name="Periods"><ClockIcon /></Split>
          <Group as="span" $w={8} />
          <Split name="Templates"><TemplateIcon /></Split>
        </Group>
        <Grip />
        <Group $w={700} $gap={4}>
          {PERIODS.map((name) => (
            <PeriodButton key={name} $w={73} $pressed={name === "M15"} aria-pressed={name === "M15"}>
              {name}
            </PeriodButton>
          ))}
        </Group>
      </Toolbar>

      <ChartWindow>
        <Panel>
          <Plot>
            <g transform="translate(0 -122)">
              <Series data={MA_BASE} width={5.6} />
              <Series data={MA_SLOW} width={4.6} />
              <Series data={MA_MID} width={3.6} />
              <Series data={MA_FAST} />
              <Candles />
              <Marks items={PRICE_MARKS} />
            </g>
            <Cursor />
            <rect x="2191" y="1" width="3" height="4" fill="#fff" stroke={RED} />
            <rect x="2191" y="1109" width="3" height="4" fill="#fff" stroke={RED} />
          </Plot>
          <Watermark>11</Watermark>
          <MenuCaret />
          <PanelTitle $top={4} $left={38}>GBPAUD,M15  1.79844 1.79902 1.79799 1.79866</PanelTitle>
          <Signal>SELL</Signal>
        </Panel>
        <Splitter />
        <Panel $h={179}>
          <PanelTitle $top={5} $left={4}>M15 MACD (8,20,9) 0.0009 0.0000 0.0000 0.0009 -0.0008 -0.0017</PanelTitle>
          <Plot>
            <g transform="translate(0 -1239)">
              <Dots y={1302} runs={M15_DOTS} />
              <Series data={M15_SIGNAL} />
              <Series data={M15_MAIN} />
              <Marks items={M15_MARKS} />
            </g>
            <Cursor />
          </Plot>
        </Panel>
        <Splitter />
        <Panel $h={157}>
          <PanelTitle $top={5} $left={4}>H1 MACD (8,20,9) -0.0012 0.0000 0.0000 -0.0012 -0.0031 -0.0031 -0.0020 -0.0020</PanelTitle>
          <Plot>
            <g transform="translate(0 -1421)">
              <Dots y={1458} runs={H1_DOTS} />
              <Series data={H1_SIGNAL} />
              <Series data={H1_MAIN} />
              <Marks items={[[94, 1461, true]]} />
            </g>
            <Cursor />
          </Plot>
        </Panel>
        <Splitter />
        <Panel $h={199}>
          <PanelTitle $top={5} $left={4}>H4 MACD (8,20,9) -0.0003 0.0000 0.0000 -0.0003 -0.0039 -0.0039 -0.0036 -0.0036</PanelTitle>
          <Plot>
            <g transform="translate(0 -1581)">
              <Dots y={1681} runs={H4_DOTS} />
              <Series data={H4_MAIN} />
              <Series data={H4_SIGNAL} />
            </g>
            <Cursor />
          </Plot>
        </Panel>
        <TimeAxis>
          {TIMES.map((time, i) => (
            <TimeCell key={i}>{time}</TimeCell>
          ))}
          <TimeCursor>2019.01.29 19:45</TimeCursor>
        </TimeAxis>
      </ChartWindow>

      <TabStrip>
        <Tab $w={229} />
        <Tab $w={244} />
        <Tab $w={240} />
        <Tab $w={241} />
        <Tab $w={239} />
        <Tab $w={279} $active />
        <Tab />
      </TabStrip>
    </Frame>
  );
}
